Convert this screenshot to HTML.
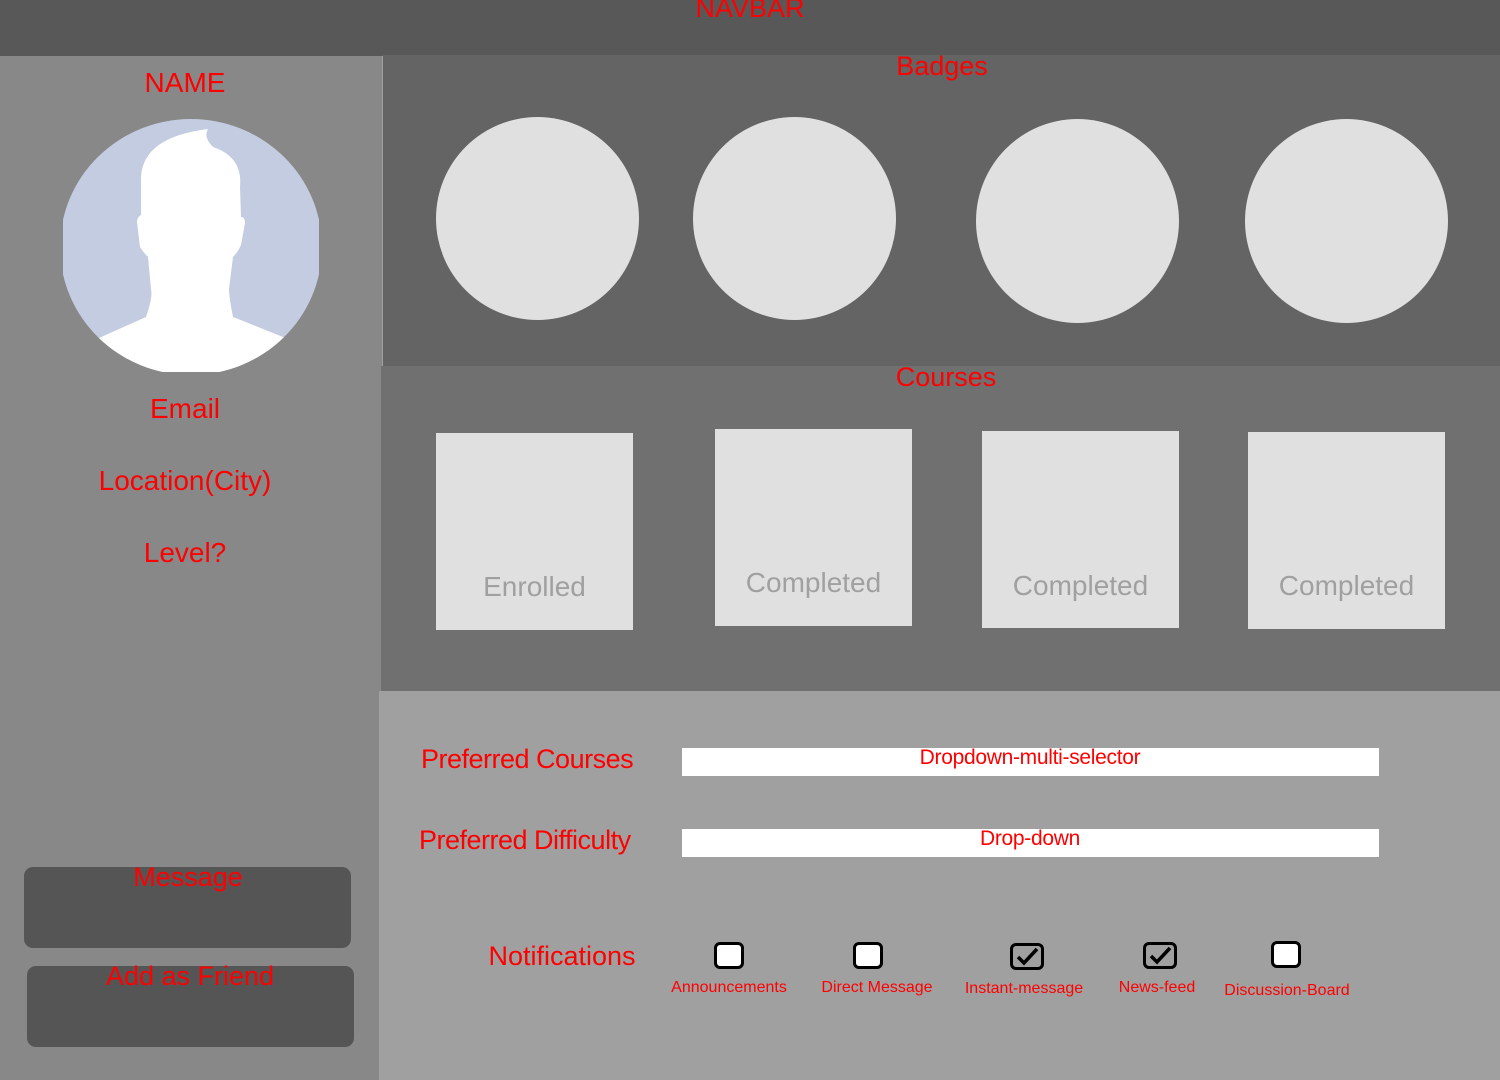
<!DOCTYPE html>
<html><head><meta charset="utf-8"><style>
*{margin:0;padding:0;box-sizing:border-box}
body{width:1500px;height:1080px;position:relative;overflow:hidden;background:#a0a0a0;font-family:"Liberation Sans",sans-serif;color:#f00}
.a{position:absolute}
.t{position:absolute;transform:translateX(-50%);white-space:nowrap;line-height:1;color:#f00}
.l{position:absolute;white-space:nowrap;line-height:1;color:#f00}
.circ{position:absolute;width:203px;height:203px;border-radius:50%;background:#e0e0e0}
.sq{position:absolute;width:197px;height:197px;background:#e0e0e0}
.ct{position:absolute;left:50%;transform:translateX(-50%);white-space:nowrap;line-height:1;color:#a0a0a0;font-size:28px}
.cb{position:absolute;width:30px;height:27px;border:3px solid #000;border-radius:6px;background:#fff}
.cl{position:absolute;transform:translateX(-50%);white-space:nowrap;line-height:1;font-size:16px;color:#f00}
</style></head><body>
<div class="a" style="left:0;top:0;width:1500px;height:56px;background:#585858"></div>
<div class="a" style="left:0;top:56px;width:382px;height:1024px;background:#888"></div>
<div class="a" style="left:383px;top:55px;width:1117px;height:311px;background:#646464"></div>
<div class="a" style="left:381px;top:366px;width:1119px;height:325px;background:#707070"></div>
<div class="a" style="left:379px;top:691px;width:1121px;height:389px;background:#a0a0a0"></div>

<div class="t" style="left:750px;top:-5px;font-size:27px">NAVBAR</div>
<div class="t" style="left:185px;top:69px;font-size:28px">NAME</div>

<svg class="a" style="left:63px;top:117px" width="256" height="255" viewBox="0 0 256 255">
<defs><clipPath id="c"><ellipse cx="128" cy="130" rx="131" ry="128"/></clipPath></defs>
<g clip-path="url(#c)">
<rect x="0" y="0" width="256" height="255" fill="#c3cce0"/>
<path d="M36 221 L83 200 Q90 180 88 172 L85 140 Q80 135 77 130 L74 105 Q74 100 78 98 L78 60 Q80 20 145 12 Q140 20 150 30 Q180 40 177 70 L178 100 Q182 100 182 106 L178 128 Q175 135 170 140 L166 172 Q166 180 170 200 L220 220 L260 260 L0 260 Z" fill="#fff"/>
</g>
</svg>

<div class="t" style="left:185px;top:395px;font-size:28px">Email</div>
<div class="t" style="left:185px;top:467px;font-size:28px">Location(City)</div>
<div class="t" style="left:185px;top:539px;font-size:28px">Level?</div>

<div class="a" style="left:24px;top:867px;width:327px;height:81px;border-radius:9px;background:#555"></div>
<div class="a" style="left:27px;top:966px;width:327px;height:81px;border-radius:9px;background:#555"></div>
<div class="t" style="left:188px;top:864px;font-size:27px">Message</div>
<div class="t" style="left:190px;top:963px;font-size:27px">Add as Friend</div>

<div class="t" style="left:942px;top:53px;font-size:27px">Badges</div>
<div class="circ" style="left:436px;top:117px"></div>
<div class="circ" style="left:693px;top:117px"></div>
<div class="circ" style="left:976px;top:119px;height:204px"></div>
<div class="circ" style="left:1245px;top:119px;height:204px"></div>

<div class="t" style="left:946px;top:364px;font-size:27px">Courses</div>
<div class="sq" style="left:436px;top:433px"><div class="ct" style="top:140px">Enrolled</div></div>
<div class="sq" style="left:715px;top:429px"><div class="ct" style="top:140px">Completed</div></div>
<div class="sq" style="left:982px;top:431px"><div class="ct" style="top:141px">Completed</div></div>
<div class="sq" style="left:1248px;top:432px"><div class="ct" style="top:140px">Completed</div></div>

<div class="l" style="left:421px;top:746px;font-size:27px;letter-spacing:-0.5px">Preferred Courses</div>
<div class="l" style="left:419px;top:827px;font-size:27px;letter-spacing:-0.5px">Preferred Difficulty</div>
<div class="a" style="left:682px;top:748px;width:697px;height:28px;background:#fff"></div>
<div class="a" style="left:682px;top:829px;width:697px;height:28px;background:#fff"></div>
<div class="t" style="left:1030px;top:747px;font-size:21px;letter-spacing:-0.3px">Dropdown-multi-selector</div>
<div class="t" style="left:1030px;top:828px;font-size:21px;letter-spacing:-0.3px">Drop-down</div>

<div class="t" style="left:562px;top:943px;font-size:27px">Notifications</div>
<div class="cb" style="left:714px;top:942px"></div>
<div class="cb" style="left:853px;top:942px"></div>
<div class="cb" style="left:1010px;top:943px;width:34px;background:#a0a0a0"><svg width="28" height="21" style="position:absolute;left:0;top:0"><path d="M5 11 L11 17 L24 3" stroke="#000" stroke-width="3.5" fill="none"/></svg></div>
<div class="cb" style="left:1143px;top:942px;width:34px;background:#a0a0a0"><svg width="28" height="21" style="position:absolute;left:0;top:0"><path d="M5 11 L11 17 L24 3" stroke="#000" stroke-width="3.5" fill="none"/></svg></div>
<div class="cb" style="left:1271px;top:941px"></div>
<div class="cl" style="left:729px;top:980px">Announcements</div>
<div class="cl" style="left:877px;top:980px">Direct Message</div>
<div class="cl" style="left:1024px;top:981px">Instant-message</div>
<div class="cl" style="left:1157px;top:980px">News-feed</div>
<div class="cl" style="left:1287px;top:983px">Discussion-Board</div>
</body></html>
